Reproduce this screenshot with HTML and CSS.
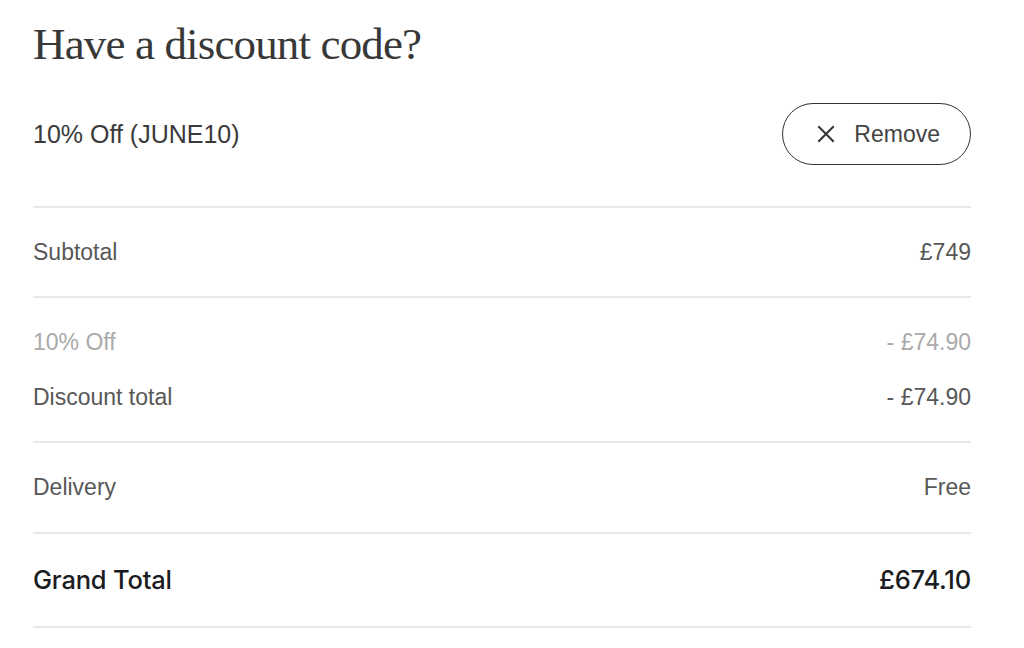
FILE: index.html
```html
<!DOCTYPE html>
<html lang="en">
<head>
<meta charset="utf-8">
<title>Discount</title>
<link rel="stylesheet" href="styles.css">
</head>
<body>
<main class="summary">
  <h1 class="title">Have a discount code?</h1>
  <div class="code-row">
    <span class="code">10% Off (JUNE10)</span>
    <button class="remove" type="button">
      <svg class="x" viewBox="0 0 18 18" width="18" height="18" aria-hidden="true"><path d="M2 2 L16 16 M16 2 L2 16" stroke="#333" stroke-width="2" fill="none" stroke-linecap="square"/></svg>
      <span>Remove</span>
    </button>
  </div>
  <div class="section">
    <div class="row"><span>Subtotal</span><span>£749</span></div>
  </div>
  <div class="section discounts">
    <div class="row muted"><span>10% Off</span><span>- £74.90</span></div>
    <div class="row"><span>Discount total</span><span>- £74.90</span></div>
  </div>
  <div class="section delivery">
    <div class="row"><span>Delivery</span><span>Free</span></div>
  </div>
  <div class="section total">
    <div class="row grand"><span>Grand Total</span><span>£674.10</span></div>
  </div>
</main>
</body>
</html>
```
FILE: styles.css
```css
html, body {
  margin: 0;
  padding: 0;
  background: #fff;
}
body {
  font-family: "Liberation Sans", Arial, sans-serif;
  color: #444;
}
.summary {
  width: 938px;
  margin-left: 33px;
  padding-top: 14px;
}
.title {
  margin: 0;
  font-family: "Liberation Serif", "Times New Roman", serif;
  font-weight: 400;
  font-size: 45px;
  line-height: 60px;
  letter-spacing: -0.85px;
  color: #383838;
}
.code-row {
  display: flex;
  justify-content: space-between;
  align-items: center;
  padding: 29px 0 41px;
  border-bottom: 2px solid #e8e8e8;
}
.code {
  font-size: 25px;
  color: #3a3a3a;
}
.remove {
  display: flex;
  align-items: center;
  gap: 19px;
  height: 62px;
  padding: 0 30px 0 34px;
  border: 1.5px solid #333;
  border-radius: 31px;
  background: #fff;
  font-family: inherit;
  font-size: 23px;
  color: #444;
}
.x { display: block; }
.section {
  padding: 29px 0;
  border-bottom: 2px solid #e8e8e8;
  display: flex;
  flex-direction: column;
  gap: 25px;
}
.section.delivery { padding-bottom: 30px; }
.row {
  display: flex;
  justify-content: space-between;
  align-items: center;
  font-size: 23px;
  line-height: 30px;
  color: #585858;
}
.row.muted { color: #aaa; }
.total { padding: 31px 0; }
.row.grand {
  font-family: Inter, "Liberation Sans", Arial, sans-serif;
  font-size: 25.5px;
  font-weight: 500;
  letter-spacing: -0.2px;
  color: #1a1c22;
}
```
